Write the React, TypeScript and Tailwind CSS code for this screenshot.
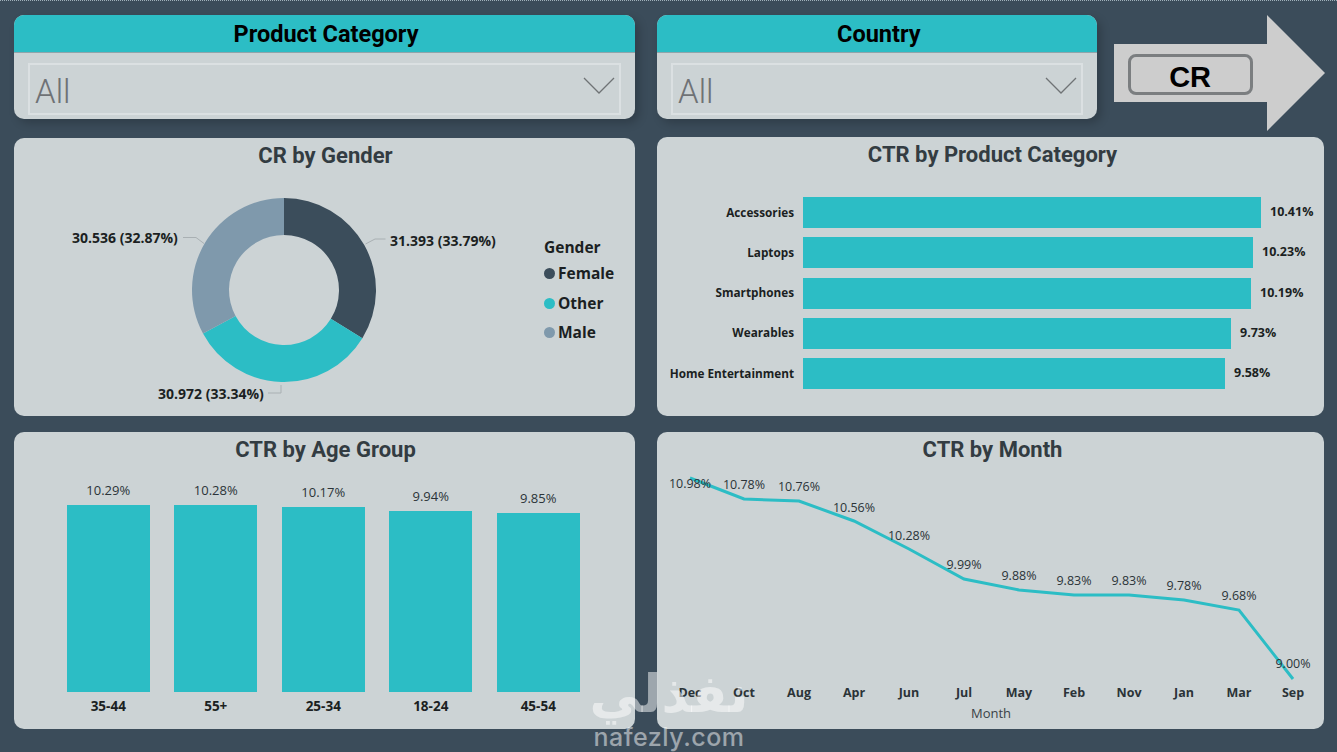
const ageBars = [
  { label: "35-44", value: "10.29%", bar: "h-[187px]" },
  { label: "55+", value: "10.28%", bar: "h-[187px]" },
  { label: "25-34", value: "10.17%", bar: "h-[185px]" },
  { label: "18-24", value: "9.94%", bar: "h-[181px]" },
  { label: "45-54", value: "9.85%", bar: "h-[179px]" },
];

const categoryBars = [
  { label: "Accessories", value: "10.41%", bar: "w-[458px]" },
  { label: "Laptops", value: "10.23%", bar: "w-[450px]" },
  { label: "Smartphones", value: "10.19%", bar: "w-[448px]" },
  { label: "Wearables", value: "9.73%", bar: "w-[428px]" },
  { label: "Home Entertainment", value: "9.58%", bar: "w-[422px]" },
];

const months = [
  { m: "Dec", v: "10.98%", x: 33, y: 46, ly: 56 },
  { m: "Oct", v: "10.78%", x: 87, y: 67, ly: 57 },
  { m: "Aug", v: "10.76%", x: 142, y: 69, ly: 59 },
  { m: "Apr", v: "10.56%", x: 197, y: 89, ly: 80 },
  { m: "Jun", v: "10.28%", x: 252, y: 117, ly: 108 },
  { m: "Jul", v: "9.99%", x: 307, y: 147, ly: 137 },
  { m: "May", v: "9.88%", x: 362, y: 158, ly: 148 },
  { m: "Feb", v: "9.83%", x: 417, y: 163, ly: 153 },
  { m: "Nov", v: "9.83%", x: 472, y: 163, ly: 153 },
  { m: "Jan", v: "9.78%", x: 527, y: 168, ly: 158 },
  { m: "Mar", v: "9.68%", x: 582, y: 178, ly: 168 },
  { m: "Sep", v: "9.00%", x: 636, y: 247, ly: 236 },
];

const legend = [
  { name: "Female", dot: "bg-[#3b4d5b]" },
  { name: "Other", dot: "bg-[#2cbdc5]" },
  { name: "Male", dot: "bg-[#7f99ac]" },
];

function slice(a0: number, a1: number) {
  const cx = 92, cy = 92, R = 92, r = 55;
  const p = (rad: number, a: number) => {
    const t = (a * Math.PI) / 180;
    return `${(cx + rad * Math.sin(t)).toFixed(2)} ${(cy - rad * Math.cos(t)).toFixed(2)}`;
  };
  return `M${p(R, a0)} A${R} ${R} 0 0 1 ${p(R, a1)} L${p(r, a1)} A${r} ${r} 0 0 0 ${p(r, a0)}Z`;
}

function Filter({ title, width, inset }: { title: string; width: string; inset: string }) {
  return (
    <div className={`${width} h-[104px] rounded-[10px] bg-[#ccd3d5] overflow-hidden shadow-[4px_4px_10px_rgba(0,0,0,0.2)]`}>
      <div className={`h-[38px] bg-[#2cbdc5] border-b border-[#8fa5ab] flex items-center justify-center pt-[3px] ${inset} font-['Roboto'] font-bold text-[23.5px] text-black`}>
        {title}
      </div>
      <div className="mx-[14px] mt-[10px] h-[52px] border-2 border-[#dbe0e2] flex items-center justify-between pl-[5px] pr-[4px]">
        <span className="font-['Roboto'] font-light text-[33px] leading-none text-[#6f7275] pt-[4px]">All</span>
        <svg width="32" height="18" viewBox="0 0 32 18" className="mb-[6px]">
          <path d="M1 1 L16 16 L31 1" fill="none" stroke="#6f7375" strokeWidth="1.3" />
        </svg>
      </div>
    </div>
  );
}

function Title({ children, inset }: { children: string; inset: string }) {
  return <div className={`text-center ${inset} font-['Roboto'] font-bold text-[22px] leading-[26px] text-[#333c42]`}>{children}</div>;
}

export default function App() {
  return (
    <div className="relative h-[752px] w-[1337px] overflow-hidden bg-[#3b4c5a] border-t border-dotted border-[#9fb0ba] pl-[14px] pt-[14px] flex gap-[22px]">
      <div className="w-[621px] flex flex-col">
        <Filter title="Product Category" width="w-[621px]" inset="pl-[3px]" />

        <section className="mt-[19px] h-[278px] rounded-[10px] bg-[#ccd3d5] pt-[5px]">
          <Title inset="pl-[2px]">CR by Gender</Title>
          <div className="flex mt-[24px]">
            <svg width="500" height="212" viewBox="-178 -5 500 212" className="font-['Open_Sans'] font-bold shrink-0">
              <path d={slice(0, 121.6)} fill="#3b4d5b" />
              <path d={slice(121.6, 241.7)} fill="#2cbdc5" />
              <path d={slice(241.7, 360)} fill="#7f99ac" />
              <path d="M173.5 46 L183 41 L193.5 41" fill="none" stroke="#a9b0b3" />
              <path d="M-9 39.5 L4 39.5 L12 45.5" fill="none" stroke="#a9b0b3" />
              <path d="M89 187 L89 195 L76 195" fill="none" stroke="#a9b0b3" />
              <text x="198" y="48" fontSize="14" fill="#1b1f22">31.393 (33.79%)</text>
              <text x="-120" y="45" fontSize="14" fill="#1b1f22">30.536 (32.87%)</text>
              <text x="-34" y="201" fontSize="14" fill="#1b1f22">30.972 (33.34%)</text>
            </svg>
            <div className="ml-[30px] mt-[42px] font-['Open_Sans'] font-bold text-[#1b1f22]">
              <div className="text-[15.5px] leading-[24px]">Gender</div>
              {legend.map((l) => (
                <div key={l.name} className="flex items-center gap-[3px] h-[29.5px] text-[15.5px]">
                  <span className={`w-[11px] h-[11px] rounded-full ${l.dot}`} />
                  {l.name}
                </div>
              ))}
            </div>
          </div>
        </section>

        <section className="mt-[16px] h-[297px] rounded-[10px] bg-[#ccd3d5] pt-[5px]">
          <Title inset="pl-[2px]">CTR by Age Group</Title>
          <div className="ml-[52.75px] flex gap-[24.5px] items-end h-[229px]">
            {ageBars.map((b) => (
              <div key={b.label} className="w-[83px] flex flex-col items-center">
                <span className="font-['Open_Sans'] text-[13px] leading-[18px] mb-[6px] text-[#2b3338]">{b.value}</span>
                <div className={`w-full ${b.bar} bg-[#2cbdc5]`} />
              </div>
            ))}
          </div>
          <div className="ml-[52.75px] mt-[5px] flex gap-[24.5px]">
            {ageBars.map((b) => (
              <div key={b.label} className="w-[83px] text-center font-['Open_Sans'] font-bold text-[13.5px] leading-[18px] text-[#1b1f22]">
                {b.label}
              </div>
            ))}
          </div>
        </section>
      </div>

      <div className="w-[667px] flex flex-col">
        <div className="flex items-start gap-[17px]">
          <Filter title="Country" width="w-[441px]" inset="pl-[4px]" />
          <div className="relative w-[211px] h-[116px] flex items-center pl-[14px]">
            <svg width="211" height="116" viewBox="0 0 211 116" className="absolute left-0 top-0">
              <path d="M0 29 H153 V0 L211 58 L153 116 V87 H0Z" fill="#cdcdcd" />
            </svg>
            <div className="relative w-[125px] h-[41px] mt-[2px] rounded-[8px] border-[3px] border-[#7b7e80] flex items-center justify-center pt-[7px] font-['Liberation_Sans'] font-bold text-[29px] text-black">
              CR
            </div>
          </div>
        </div>

        <section className="mt-[6px] h-[279px] rounded-[10px] bg-[#ccd3d5] pt-[5px]">
          <Title inset="pl-[4px]">CTR by Product Category</Title>
          <div className="mt-[29px] flex flex-col gap-[9.25px]">
            {categoryBars.map((b) => (
              <div key={b.label} className="flex items-center h-[31px] font-['Open_Sans'] font-bold text-[#1b1f22]">
                <span className="w-[137px] text-right text-[11.75px]">{b.label}</span>
                <div className={`ml-[9px] h-full ${b.bar} bg-[#2cbdc5]`} />
                <span className="ml-[9px] text-[12.5px]">{b.value}</span>
              </div>
            ))}
          </div>
        </section>

        <section className="mt-[16px] h-[297px] rounded-[10px] bg-[#ccd3d5] pt-[5px]">
          <Title inset="pl-[4px]">CTR by Month</Title>
          <svg width="667" height="266" viewBox="0 31 667 266" className="font-['Open_Sans']">
            <polyline
              points={months.map((p) => `${p.x},${p.y}`).join(" ")}
              fill="none"
              stroke="#2cbdc5"
              strokeWidth="3"
            />
            {months.map((p) => (
              <g key={p.m}>
                <text x={p.x} y={p.ly} textAnchor="middle" fontSize="12.5" fill="#2b3338">{p.v}</text>
                <text x={p.x} y={265} textAnchor="middle" fontSize="12.5" fontWeight="700" fill="#2b3338">{p.m}</text>
              </g>
            ))}
            <text x="334" y="286" textAnchor="middle" fontSize="13" fill="#3a4247">Month</text>
          </svg>
        </section>
      </div>

      <div className="absolute left-[579px] top-[662px] w-[180px] text-center text-white/50 pointer-events-none">
        <div className="font-['DejaVu_Sans'] font-bold text-[52px] leading-[62px]">نفذلي</div>
        <div className="font-['Inter'] font-medium text-[25px] leading-[24px] tracking-[0.5px]">nafezly.com</div>
      </div>
    </div>
  );
}
